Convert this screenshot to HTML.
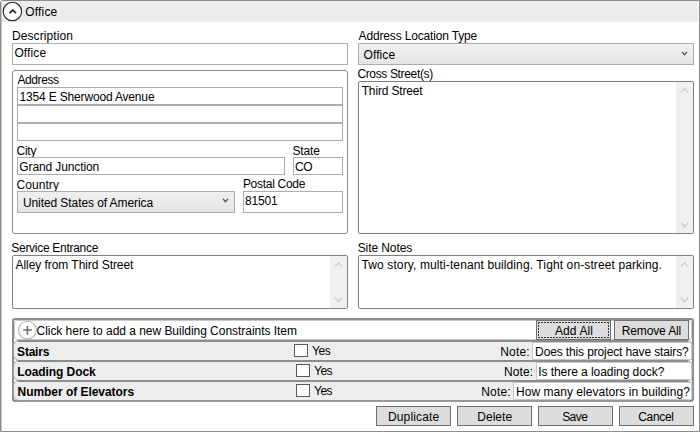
<!DOCTYPE html>
<html><head><meta charset="utf-8">
<style>
*{box-sizing:border-box;margin:0;padding:0}
html,body{width:700px;height:432px;overflow:hidden;background:#fff}
body{position:relative;font-family:"Liberation Sans",sans-serif;font-size:12px;color:#000}
.a{position:absolute}
.t{position:absolute;white-space:pre;line-height:14px;height:14px}
.tb{position:absolute;background:#fff;border:1px solid #abadb3}
.cb{position:absolute;border:1px solid #acacac;background:linear-gradient(#f0f0f0,#e5e5e5)}
.ta{position:absolute;background:#fff;border:1px solid #7f7f7f;border-radius:2px}
.sb{position:absolute;top:0;bottom:0;right:0;width:17px;background:#f0f0f0}
.btn{position:absolute;background:#dddddd;border:1px solid #707070;text-align:center}
.row{position:absolute;background:#ededed;border:1px solid #a0a0a0;border-radius:6px}
.chk{position:absolute;width:14px;height:13px;border:1px solid #5a5a5a;background:#fff}
.b{font-weight:bold}
.nt{border-color:#c6c6c6}
</style></head><body>
<!-- frame -->
<div class="a" style="left:0;top:0;width:700px;height:432px;border:1px solid #8c8c8c;border-top-left-radius:3px;"></div>
<div class="a" style="left:1px;top:1px;width:1px;height:430px;background:#c8c8c8"></div>
<div class="a" style="left:2px;top:1px;width:696px;height:21px;background:#ececec"></div>
<svg class="a" style="left:0;top:0" width="26" height="24" viewBox="0 0 26 24">
<circle cx="12.4" cy="11.5" r="9.2" fill="#fcfcfc" stroke="#262626" stroke-width="1.1"/>
<path d="M9.4 13.1 L12.7 10.1 L16 13.1" fill="none" stroke="#262626" stroke-width="1.8"/>
</svg>
<div class="t" style="left:25.30px;top:5px;letter-spacing:0.16px">Office</div>

<!-- Description -->
<div class="t" style="left:11.90px;top:29px;letter-spacing:0.1px">Description</div>
<div class="tb" style="left:12px;top:43px;width:336px;height:22px"></div>
<div class="t" style="left:14.40px;top:46px;letter-spacing:0.12px">Office</div>

<!-- Address location type -->
<div class="t" style="left:358.60px;top:29px;letter-spacing:-0.16px">Address Location Type</div>
<div class="cb" style="left:358px;top:43px;width:336px;height:22px"></div>
<div class="t" style="left:363.60px;top:48px;letter-spacing:0.08px">Office</div>
<svg class="a" style="left:680px;top:50px" width="9" height="6" viewBox="0 0 9 6"><path d="M2 1.8 L4.5 4.7 L7 1.8" fill="none" stroke="#505050" stroke-width="1.25"/></svg>

<!-- Address group -->
<div class="a" style="left:12px;top:70px;width:336px;height:164px;border:1px solid #8c8c8c;border-radius:3px"></div>
<div class="t" style="left:17.40px;top:73px;letter-spacing:-0.4px">Address</div>
<div class="tb" style="left:17px;top:87px;width:326px;height:18px"></div>
<div class="t" style="left:19.50px;top:90px;letter-spacing:-0.167px">1354 E Sherwood Avenue</div>
<div class="tb" style="left:17px;top:105px;width:326px;height:18px"></div>
<div class="tb" style="left:17px;top:123px;width:326px;height:18px"></div>
<div class="t" style="left:16.50px;top:144px;letter-spacing:-0.233px">City</div>
<div class="tb" style="left:17px;top:157px;width:268px;height:18px"></div>
<div class="t" style="left:19.30px;top:160px;letter-spacing:-0.108px">Grand Junction</div>
<div class="t" style="left:292.40px;top:144px;letter-spacing:-0.125px">State</div>
<div class="tb" style="left:293px;top:157px;width:50px;height:18px"></div>
<div class="t" style="left:295.10px;top:160px;letter-spacing:-0.6px">CO</div>
<div class="t" style="left:16.50px;top:178px;letter-spacing:0.067px">Country</div>
<div class="cb" style="left:17px;top:191px;width:218px;height:22px"></div>
<div class="t" style="left:22.90px;top:196px;letter-spacing:-0.078px">United States of America</div>
<svg class="a" style="left:221px;top:197px" width="9" height="6" viewBox="0 0 9 6"><path d="M2 1.8 L4.5 4.7 L7 1.8" fill="none" stroke="#505050" stroke-width="1.25"/></svg>
<div class="t" style="left:242.90px;top:177px;letter-spacing:-0.29px">Postal Code</div>
<div class="tb" style="left:243px;top:191px;width:100px;height:22px"></div>
<div class="t" style="left:245.00px;top:194px;letter-spacing:-0.2px">81501</div>

<!-- Cross streets -->
<div class="t" style="left:357.40px;top:67px;letter-spacing:-0.35px">Cross Street(s)</div>
<div class="ta" style="left:358px;top:81px;width:336px;height:153px"><div class="sb"></div></div>
<div class="t" style="left:361.70px;top:84px;letter-spacing:-0.155px">Third Street</div>
<svg class="a" style="left:680px;top:87px" width="9" height="8" viewBox="0 0 9 8"><path d="M1 5.5 L4.5 1.6 L8 5.5" fill="none" stroke="#c4c4c8" stroke-width="1.05"/></svg>
<svg class="a" style="left:680px;top:221px" width="9" height="8" viewBox="0 0 9 8"><path d="M1 1.6 L4.5 5.9 L8 1.6" fill="none" stroke="#c4c4c8" stroke-width="1.05"/></svg>

<!-- Service entrance -->
<div class="t" style="left:11.30px;top:241px;letter-spacing:-0.287px">Service Entrance</div>
<div class="ta" style="left:12px;top:255px;width:336px;height:54px"><div class="sb"></div></div>
<div class="t" style="left:15.50px;top:258px;letter-spacing:-0.055px">Alley from Third Street</div>
<svg class="a" style="left:334px;top:261px" width="9" height="8" viewBox="0 0 9 8"><path d="M1 5.5 L4.5 1.6 L8 5.5" fill="none" stroke="#c4c4c8" stroke-width="1.05"/></svg>
<svg class="a" style="left:334px;top:296px" width="9" height="8" viewBox="0 0 9 8"><path d="M1 1.6 L4.5 5.9 L8 1.6" fill="none" stroke="#c4c4c8" stroke-width="1.05"/></svg>

<!-- Site notes -->
<div class="t" style="left:357.70px;top:241px;letter-spacing:-0.089px">Site Notes</div>
<div class="ta" style="left:358px;top:255px;width:336px;height:54px"><div class="sb"></div></div>
<div class="t" style="left:361.50px;top:258px;letter-spacing:0.114px">Two story, multi-tenant building. Tight on-street parking.</div>
<svg class="a" style="left:680px;top:261px" width="9" height="8" viewBox="0 0 9 8"><path d="M1 5.5 L4.5 1.6 L8 5.5" fill="none" stroke="#c4c4c8" stroke-width="1.05"/></svg>
<svg class="a" style="left:680px;top:296px" width="9" height="8" viewBox="0 0 9 8"><path d="M1 1.6 L4.5 5.9 L8 1.6" fill="none" stroke="#c4c4c8" stroke-width="1.05"/></svg>

<!-- Constraints -->
<div class="a" style="left:12px;top:318px;width:682px;height:84px;border:2px solid #8c8c8c;border-radius:3px;background:#fff"></div>
<div class="a" style="left:14px;top:320px;width:678px;height:20px;border:1px solid #c8c8c8;border-radius:3px"></div>
<svg class="a" style="left:17px;top:320px" width="21" height="21" viewBox="0 0 21 21">
<circle cx="10.4" cy="10.1" r="8.9" fill="#fff" stroke="#b4b4b4" stroke-width="1.1"/>
<path d="M6.2 10.1 H14.9 M10.4 5.9 V14.7" stroke="#6a6a6a" stroke-width="1.5"/>
</svg>
<div class="t" style="left:36.50px;top:324px;letter-spacing:-0.035px">Click here to add a new Building Constraints Item</div>
<div class="btn" style="left:536px;top:320px;width:75px;height:20px"></div>
<div class="a" style="left:538px;top:322px;width:71px;height:1px;background:repeating-linear-gradient(90deg,#383838 0 2px,transparent 2px 3px)"></div><div class="a" style="left:538px;top:337px;width:71px;height:1px;background:repeating-linear-gradient(90deg,#383838 0 2px,transparent 2px 3px)"></div><div class="a" style="left:538px;top:322px;width:1px;height:16px;background:repeating-linear-gradient(180deg,#383838 0 2px,transparent 2px 3px)"></div><div class="a" style="left:608px;top:322px;width:1px;height:16px;background:repeating-linear-gradient(180deg,#383838 0 2px,transparent 2px 3px)"></div>
<div class="t" style="left:554.90px;top:324px;letter-spacing:0.117px">Add All</div>
<div class="btn" style="left:614px;top:320px;width:75px;height:20px"></div>
<div class="t" style="left:621.70px;top:324px;letter-spacing:-0.122px">Remove All</div>

<div class="row" style="left:13px;width:680px;top:340px;height:21px"></div>
<div class="row" style="left:13px;width:680px;top:360px;height:21px"></div>
<div class="row" style="left:13px;width:680px;top:380px;height:21px"></div>
<div class="a" style="left:18px;top:340px;width:670px;height:2px;background:#8c8c8c"></div>
<div class="a" style="left:18px;top:360px;width:670px;height:2px;background:#8c8c8c"></div>
<div class="a" style="left:18px;top:380px;width:670px;height:2px;background:#8c8c8c"></div>
<div class="a" style="left:18px;top:400px;width:670px;height:2px;background:#999"></div>

<div class="t b" style="left:17.10px;top:345px;letter-spacing:-0.22px">Stairs</div>
<div class="chk" style="left:294px;top:344px"></div>
<div class="t" style="left:311.90px;top:344px;letter-spacing:-0.3px">Yes</div>
<div class="t" style="left:500.30px;top:345px;letter-spacing:0.15px">Note:</div>
<div class="tb nt" style="left:532px;top:342px;width:160px;height:18px"></div>
<div class="t" style="left:535.10px;top:345px;letter-spacing:-0.131px">Does this project have stairs?</div>

<div class="t b" style="left:17.30px;top:365px;letter-spacing:-0.091px">Loading Dock</div>
<div class="chk" style="left:296px;top:364px"></div>
<div class="t" style="left:314.00px;top:364px;letter-spacing:-0.5px">Yes</div>
<div class="t" style="left:503.90px;top:365px;letter-spacing:0.125px">Note:</div>
<div class="tb nt" style="left:536px;top:362px;width:156px;height:18px"></div>
<div class="t" style="left:538.20px;top:365px;letter-spacing:-0.052px">Is there a loading dock?</div>

<div class="t b" style="left:17.50px;top:385px;letter-spacing:-0.039px">Number of Elevators</div>
<div class="chk" style="left:296px;top:384px"></div>
<div class="t" style="left:314.00px;top:384px;letter-spacing:-0.5px">Yes</div>
<div class="t" style="left:481.20px;top:385px;letter-spacing:0.2px">Note:</div>
<div class="tb nt" style="left:513px;top:382px;width:179px;height:18px"></div>
<div class="t" style="left:516.00px;top:385px;letter-spacing:0.037px">How many elevators in building?</div>

<!-- bottom buttons -->
<div class="btn" style="left:376px;top:406px;width:75px;height:20px"></div>
<div class="t" style="left:388.00px;top:410px;letter-spacing:0.138px">Duplicate</div>
<div class="btn" style="left:457px;top:406px;width:75px;height:20px"></div>
<div class="t" style="left:477.30px;top:410px;letter-spacing:0.02px">Delete</div>
<div class="btn" style="left:538px;top:406px;width:75px;height:20px"></div>
<div class="t" style="left:562.20px;top:410px;letter-spacing:-0.567px">Save</div>
<div class="btn" style="left:619px;top:406px;width:75px;height:20px"></div>
<div class="t" style="left:638.30px;top:410px;letter-spacing:-0.34px">Cancel</div>
</body></html>
